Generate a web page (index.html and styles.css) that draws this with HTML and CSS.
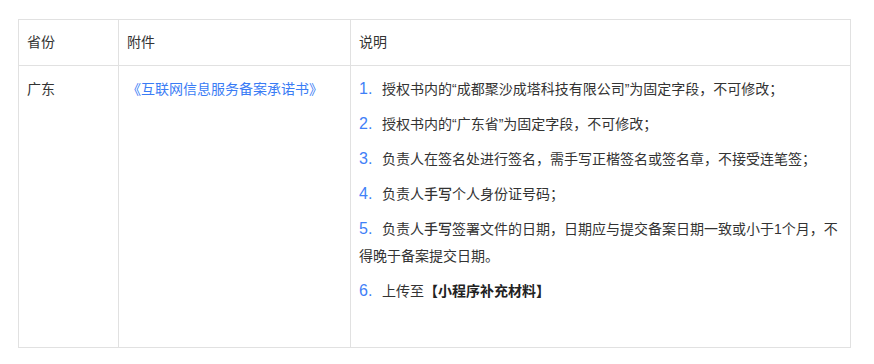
FILE: index.html
```html
<!DOCTYPE html>
<html lang="zh-CN">
<head>
<meta charset="utf-8">
<title>备案材料说明</title>
<link rel="stylesheet" href="styles.css">
</head>
<body>
<div class="page">
  <div class="grid">
    <div class="cell head">省份</div>
    <div class="cell head">附件</div>
    <div class="cell head">说明</div>

    <div class="cell body">广东</div>
    <div class="cell body"><a class="link" href="#">《互联网信息服务备案承诺书》</a></div>
    <div class="cell body notes">
      <p class="item"><span class="num">1.</span>授权书内的“成都聚沙成塔科技有限公司”为固定字段，不可修改；</p>
      <p class="item"><span class="num">2.</span>授权书内的“广东省”为固定字段，不可修改；</p>
      <p class="item"><span class="num">3.</span>负责人在签名处进行签名，需手写正楷签名或签名章，不接受连笔签；</p>
      <p class="item"><span class="num">4.</span>负责人<span class="semi">手写</span>个人身份证号码；</p>
      <p class="item"><span class="num">5.</span>负责人<span class="semi">手写</span>签署文件的日期，日期应与提交备案日期一致或小于1个月，不得晚于备案提交日期。</p>
      <p class="item"><span class="num">6.</span>上传至<strong class="strong">【小程序补充材料】</strong></p>
    </div>
  </div>
</div>
</body>
</html>
```

FILE: styles.css
```css
html, body {
  margin: 0;
  padding: 0;
  background: #ffffff;
}

.page {
  padding: 19px 0 0 18px;
  font-family: "Liberation Sans", "Noto Sans CJK SC", sans-serif;
  font-size: 14px;
  color: #333333;
}

.grid {
  display: grid;
  grid-template-columns: 100px 232px 500px;
  width: 832px;
  border-top: 1px solid #e1e1e1;
  border-left: 1px solid #e1e1e1;
}

.cell {
  box-sizing: border-box;
  border-right: 1px solid #e1e1e1;
  border-bottom: 1px solid #e1e1e1;
  padding: 0 8px;
}

.head {
  padding-top: 10px;
  padding-bottom: 10px;
  line-height: 25px;
}

.body {
  padding-top: 10px;
  padding-bottom: 42px;
  line-height: 27px;
}

.link {
  color: #3a7cf5;
  text-decoration: none;
}

.item {
  margin: 0 0 8px 0;
}

.item:last-child {
  margin-bottom: 0;
}

.num {
  display: inline-block;
  width: 23px;
  line-height: 1;
  color: #3f80f7;
  font-size: 16px;
}

.semi {
  font-weight: 500;
}

.strong {
  font-weight: bold;
  color: #222222;
}
```
